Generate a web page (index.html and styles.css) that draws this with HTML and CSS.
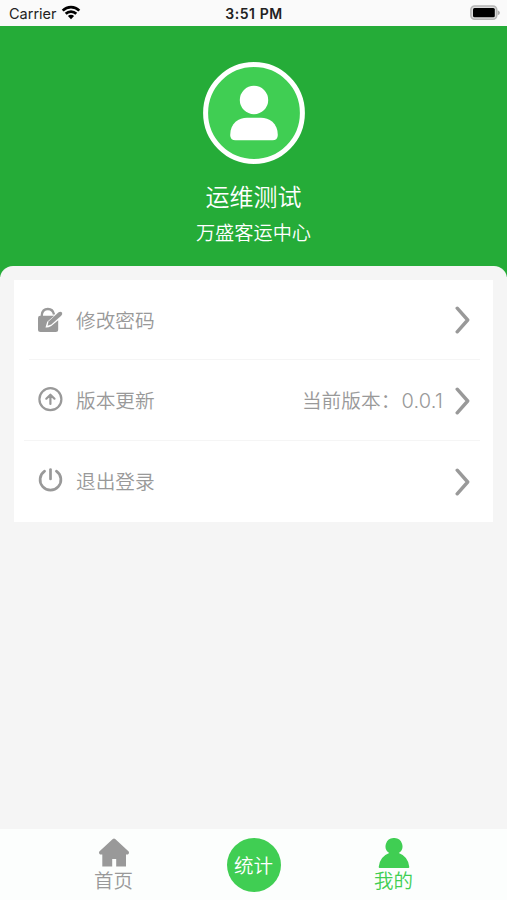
FILE: index.html
```
<!DOCTYPE html>
<html lang="zh-CN">
<head>
<meta charset="utf-8">
<title>我的</title>
<link rel="stylesheet" href="styles.css">
</head>
<body>
<div class="app">
  <header class="status">
    <div class="carrier"><span>Carrier</span>
      <svg width="20" height="15" viewBox="0 0 20 15"><g fill="none" stroke="#000" stroke-width="2.7"><path d="M1.7 5.6A11.8 11.8 0 0 1 18.3 5.6"/><path d="M4.7 8.8A7.6 7.6 0 0 1 15.3 8.8"/></g><path d="M10 14.3 6.9 11.1A4.4 4.4 0 0 1 13.1 11.1Z"/></svg>
    </div>
    <div class="time">3:51 PM</div>
    <svg class="battery" width="32" height="16" viewBox="0 0 32 16"><rect x="1.9" y="1" width="25.8" height="13.3" rx="3.8" fill="#ddd" stroke="#b5b5b5" stroke-width="1.6"/><rect x="4" y="3" width="21.8" height="9.3" rx="1.5"/><path d="M28.7 5.2Q31 6.2 31 7.7T28.7 10.2Z" fill="#aaa"/></svg>
  </header>
  <section class="profile">
    <svg class="avatar" width="102" height="102" viewBox="0 0 102 102"><circle cx="51" cy="51" r="48.4" fill="#40ce53" stroke="#fff" stroke-width="5"/><circle cx="51" cy="38" r="14.2" fill="#fff"/><path d="M27.2 73C27.2 61 36 55.8 44 55.8H58C66 55.8 74.8 61 74.8 73Q74.8 78.3 69.5 78.3H32.5Q27.2 78.3 27.2 73Z" fill="#fff"/></svg>
    <h1 class="name">运维测试</h1>
    <p class="station">万盛客运中心</p>
  </section>
  <main class="sheet">
    <div class="card">
      <div class="row">
        <svg class="icon" width="26" height="26" viewBox="0 0 26 26"><path d="M4.8 10V8Q5.4 2 10.9 2 15.9 2 17 7.5" fill="none" stroke="#999" stroke-width="2.3"/><path d="M3.2 8.8H17.2L10.2 14.8 8.5 20.4Q10.5 21 14.3 19L21.2 13.2V22.5Q21.2 25 18.7 25H3.5Q1 25 1 22.5V11Q1 8.8 3.2 8.8Z" fill="#999"/><path d="M21.6 5.2Q23.9 4 25.1 5.7 25.7 7.4 24.2 8.8L14.3 17.4 10.6 18.8 11.5 14.4Z" fill="#999"/></svg>
        <span class="label">修改密码</span>
        <svg class="chevron" width="15" height="28" viewBox="0 0 15 28"><path d="M2.2 2.2 12.7 14 2.2 25.8"/></svg>
      </div>
      <div class="row">
        <svg class="icon" width="26" height="26" viewBox="0 0 26 26"><g fill="none" stroke="#999" stroke-width="2.2" stroke-linecap="round" stroke-linejoin="round"><circle cx="13.4" cy="12.2" r="11"/><path d="M13.4 17V8M9.3 11.7 13.4 7.7 17.5 11.7"/></g></svg>
        <span class="label">版本更新</span>
        <span class="version">当前版本：<span class="number">0.0.1</span></span>
        <svg class="chevron" width="15" height="28" viewBox="0 0 15 28"><path d="M2.2 2.2 12.7 14 2.2 25.8"/></svg>
      </div>
      <div class="row">
        <svg class="icon" width="26" height="26" viewBox="0 0 26 26"><g fill="none" stroke="#999" stroke-width="2.7" stroke-linecap="round"><path d="M7.6 3.2A10.4 10.4 0 1 0 19.4 3.2"/><path d="M13.5 1.6V11"/></g></svg>
        <span class="label">退出登录</span>
        <svg class="chevron" width="15" height="28" viewBox="0 0 15 28"><path d="M2.2 2.2 12.7 14 2.2 25.8"/></svg>
      </div>
    </div>
  </main>
  <nav class="tabs">
    <div class="tab">
      <svg width="32" height="30" viewBox="0 0 32 30"><path d="M14.8 1Q16 0 17.2 1L30.7 13.4Q31.8 15 30 16.4H28V28.6H18.2V21H14.2V28.6H4.3V16.4H2Q.2 15 1.3 13.4Z" fill="#999"/></svg>
      <span>首页</span>
    </div>
    <div class="tab"><span class="round">统计</span></div>
    <div class="tab active">
      <svg width="32" height="30" viewBox="0 0 32 30"><path d="M16 0A8.2 8.2 0 0 1 20.8 15Q30.3 18.5 31.3 29Q31.3 30 30.3 30H1.7Q.7 30 .7 29Q1.7 18.5 11.2 15A8.2 8.2 0 0 1 16 0Z" fill="#40ce53"/></svg>
      <span>我的</span>
    </div>
  </nav>
</div>
</body>
</html>
```
FILE: styles.css
```
* { box-sizing: border-box; }
body { margin: 0; font-family: "Noto Sans CJK SC", sans-serif; font-weight: 350; }
svg { display: block; flex: none; }
.app { height: 900px; display: flex; flex-direction: column; background: #f5f5f5; }
.status { height: 26px; flex: none; display: grid; grid-template-columns: 1fr auto 1fr; align-items: center; padding: 1px 6px 0 9px; background: #fafafa; color: #222; font: 400 14.5px/24px Inter, sans-serif; }
.carrier { display: flex; align-items: center; gap: 4px; }
.carrier svg { margin-top: -2px; }
.time { font-weight: 600; font-size: 14px; letter-spacing: .55px; margin-left: -2px; }
.battery { justify-self: end; margin-top: -1px; }
.profile { height: 251px; flex: none; display: flex; flex-direction: column; align-items: center; padding-top: 36px; background: #25ac38; color: #fff; }
.name { margin: 14px 0 0; font-size: 24px; line-height: 36px; font-weight: 350; }
.station { margin: 4px 0 0; font-size: 19.2px; line-height: 28px; }
.sheet { flex: 1; margin-top: -11px; padding: 14px 14px 0; border-radius: 13px 13px 0 0; background: #f5f5f5; }
.card { background: #fff; padding: 0 13px 0 10px; }
.row { height: 81px; display: flex; align-items: center; padding: 1px 10px 0 13px; border-bottom: 1px solid #f5f5f5; color: #999; font-size: 19.7px; line-height: 30px; }
.row:first-child { height: 80px; margin-left: 5px; padding: 1px 10px 0 8px; }
.row:last-child { border-bottom: 0; padding-top: 0; }
.icon { margin-top: -1px; }
.label { margin-left: 13px; margin-top: -1px; }
.chevron { margin-left: auto; }
.chevron path { fill: none; stroke: #999; stroke-width: 3.4; stroke-linecap: round; stroke-linejoin: round; }
.version { margin-left: auto; margin-top: -1px; white-space: nowrap; }
.number { margin-left: 1px; font-family: Inter, sans-serif; font-weight: 300; font-size: 20px; letter-spacing: .2px; }
.version + .chevron { margin-left: 12px; }
.tabs { height: 71px; flex: none; display: grid; grid-template-columns: 140px 140px 140px; justify-content: center; background: #fcfefd; color: #999; font-size: 19.5px; line-height: 24px; }
.tab { display: flex; flex-direction: column; align-items: center; padding-top: 9px; }
.active { color: #40ce53; }
.round { width: 54px; height: 54px; border-radius: 50%; background: #40ce53; color: #fff; line-height: 54px; text-align: center; }
```
